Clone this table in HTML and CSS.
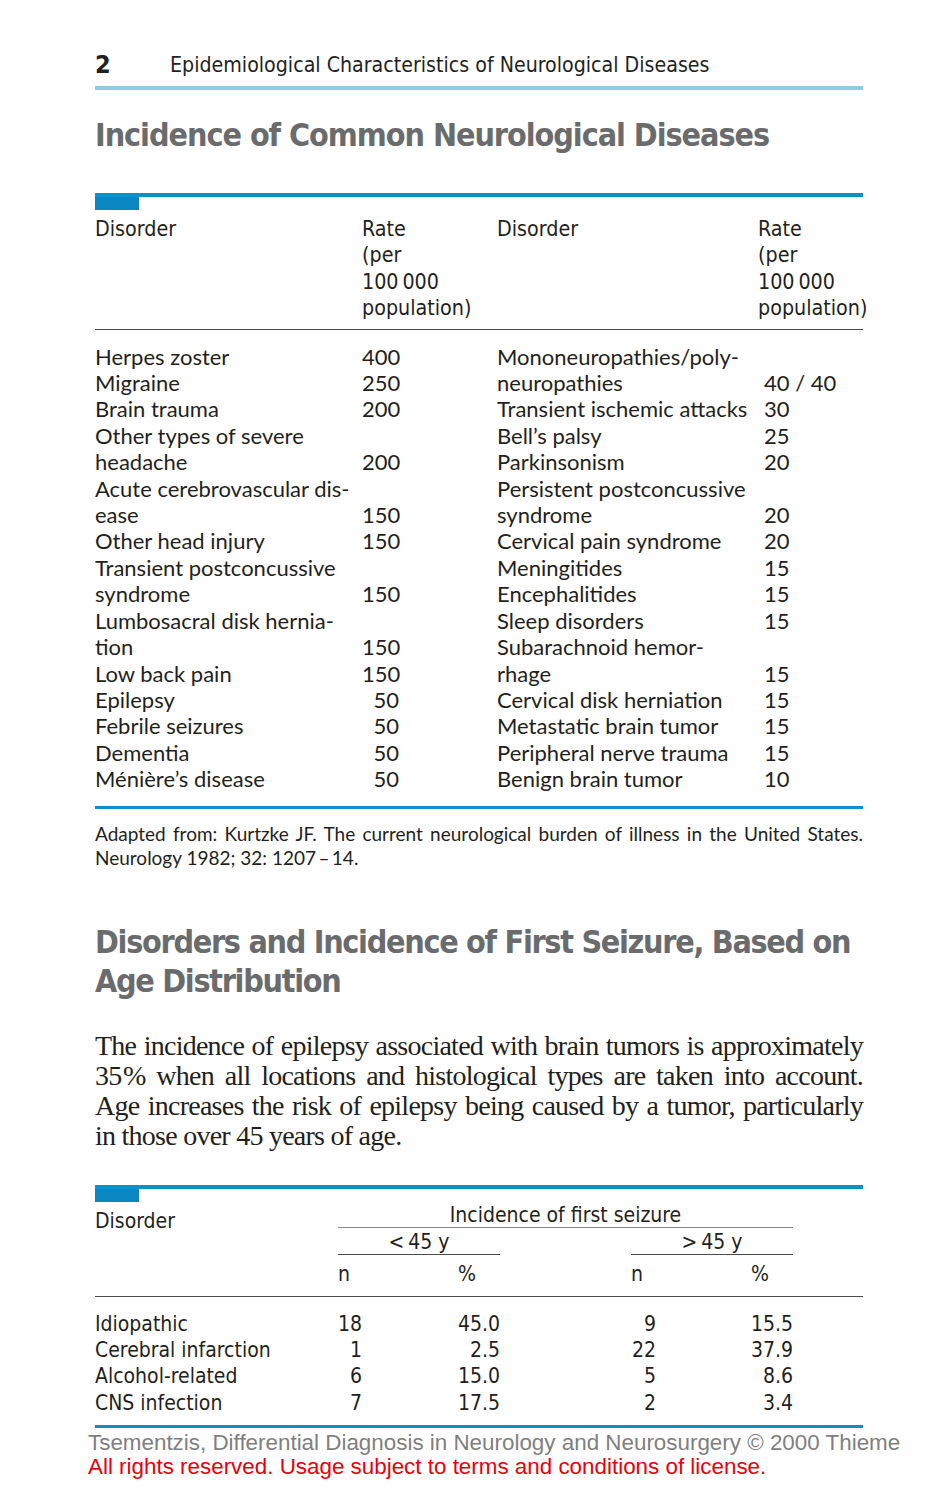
FILE: index.html
```html
<!DOCTYPE html>
<html lang="en">
<head>
<meta charset="utf-8">
<title>Epidemiological Characteristics of Neurological Diseases</title>
<link rel="stylesheet" href="styles.css">
</head>
<body>
<div class="page">
  <header class="running-head">
    <span class="folio">2</span>
    <span class="chapter">Epidemiological Characteristics of Neurological Diseases</span>
  </header>

  <h1 class="section-title">Incidence of Common Neurological Diseases</h1>

  <section class="table t1">
    <div class="tab"></div>
    <div class="t1-head">
      <div class="h-dis">Disorder</div>
      <div class="h-rate">Rate<br>(per<br>100&#8201;000<br>population)</div>
      <div class="h-dis">Disorder</div>
      <div class="h-rate">Rate<br>(per<br>100&#8201;000<br>population)</div>
    </div>
    <div class="t1-body">
      <div class="half left">
        <div class="nm">Herpes zoster</div><div class="num">400</div>
        <div class="nm">Migraine</div><div class="num">250</div>
        <div class="nm">Brain trauma</div><div class="num">200</div>
        <div class="nm">Other types of severe<br>headache</div><div class="num">200</div>
        <div class="nm">Acute cerebrovascular dis-<br>ease</div><div class="num">150</div>
        <div class="nm">Other head injury</div><div class="num">150</div>
        <div class="nm">Transient postconcussive<br>syndrome</div><div class="num">150</div>
        <div class="nm">Lumbosacral disk hernia-<br>tion</div><div class="num">150</div>
        <div class="nm">Low back pain</div><div class="num">150</div>
        <div class="nm">Epilepsy</div><div class="num">50</div>
        <div class="nm">Febrile seizures</div><div class="num">50</div>
        <div class="nm">Dementia</div><div class="num">50</div>
        <div class="nm">Ménière’s disease</div><div class="num">50</div>
      </div>
      <div class="half right">
        <div class="nm">Mononeuropathies/poly-<br>neuropathies</div><div class="num">40 / 40</div>
        <div class="nm">Transient ischemic attacks</div><div class="num">30</div>
        <div class="nm">Bell’s palsy</div><div class="num">25</div>
        <div class="nm">Parkinsonism</div><div class="num">20</div>
        <div class="nm">Persistent postconcussive<br>syndrome</div><div class="num">20</div>
        <div class="nm">Cervical pain syndrome</div><div class="num">20</div>
        <div class="nm">Meningitides</div><div class="num">15</div>
        <div class="nm">Encephalitides</div><div class="num">15</div>
        <div class="nm">Sleep disorders</div><div class="num">15</div>
        <div class="nm">Subarachnoid hemor-<br>rhage</div><div class="num">15</div>
        <div class="nm">Cervical disk herniation</div><div class="num">15</div>
        <div class="nm">Metastatic brain tumor</div><div class="num">15</div>
        <div class="nm">Peripheral nerve trauma</div><div class="num">15</div>
        <div class="nm">Benign brain tumor</div><div class="num">10</div>
      </div>
    </div>
  </section>

  <p class="source">Adapted from: Kurtzke JF. The current neurological burden of illness in the United States. Neurology 1982; 32: 1207&#8201;–&#8201;14.</p>

  <h2 class="section-title two">Disorders and Incidence of First Seizure, Based on Age Distribution</h2>

  <p class="body-text">The incidence of epilepsy associated with brain tumors is approximately 35&#8202;% when all locations and histological types are taken into account. Age increases the risk of epilepsy being caused by a tumor, particularly in those over 45 years of age.</p>

  <section class="table t2">
    <div class="tab"></div>
    <div class="t2-grid">
      <div class="c-dis">Disorder</div>
      <div class="c-inc">Incidence of first seizure</div>
      <div class="c-lt">&lt;&#8201;45 y</div>
      <div class="c-gt">&gt;&#8201;45 y</div>
      <div class="c-n1 sub">n</div>
      <div class="c-p1 sub">%</div>
      <div class="c-n2 sub">n</div>
      <div class="c-p2 sub">%</div>
      <div class="rule"></div>

      <div class="d first">Idiopathic</div><div class="v first">18</div><div class="v first">45.0</div><div class="v first n2">9</div><div class="v first">15.5</div>
      <div class="d">Cerebral infarction</div><div class="v">1</div><div class="v">2.5</div><div class="v n2">22</div><div class="v">37.9</div>
      <div class="d">Alcohol-related</div><div class="v">6</div><div class="v">15.0</div><div class="v n2">5</div><div class="v">8.6</div>
      <div class="d last">CNS infection</div><div class="v last">7</div><div class="v last">17.5</div><div class="v n2 last">2</div><div class="v last">3.4</div>
    </div>
  </section>
</div>
<footer class="license">
  <div class="credit">Tsementzis, Differential Diagnosis in Neurology and Neurosurgery © 2000 Thieme</div>
  <div class="rights">All rights reserved. Usage subject to terms and conditions of license.</div>
</footer>
</body>
</html>
```

FILE: styles.css
```css
html, body {
  margin: 0;
  padding: 0;
  background: #ffffff;
}

body {
  color: #231f20;
  font-family: "Lato", "Open Sans", sans-serif;
}

.page {
  width: 768px;
  margin-left: 95px;
  padding-top: 51px;
}

/* running head */
.running-head {
  display: flex;
  align-items: center;
  height: 26px;
  padding-bottom: 9px;
  border-bottom: 4px solid #8ecae6;
  font-family: "DejaVu Sans Condensed", "Liberation Sans", sans-serif;
}

.folio {
  width: 75px;
  font-weight: bold;
  font-size: 25px;
}

.chapter {
  font-size: 21.2px;
}

/* section titles */
.section-title {
  margin: 24px 0 0 0;
  font-family: "DejaVu Sans Condensed", "Liberation Sans", sans-serif;
  font-weight: bold;
  font-size: 32px;
  line-height: 42px;
  letter-spacing: -1.05px;
  color: #6a6b6d;
}

.section-title.two {
  margin-top: 53px;
  line-height: 39px;
  letter-spacing: -1.3px;
}

/* tables */
.table {
  border-top: 4px solid #0b90c9;
  border-bottom: 3px solid #0b90c9;
}

.tab {
  width: 44px;
  height: 13px;
  background: #0a87c3;
}

.t1 {
  margin-top: 37px;
}

.t1-head {
  display: grid;
  grid-template-columns: 267px 135px 261px 1fr;
  padding-top: 6px;
  padding-bottom: 7px;
  border-bottom: 1px solid #4a4a4a;
  font-family: "DejaVu Sans Condensed", "Liberation Sans", sans-serif;
  font-size: 21.3px;
  line-height: 26.4px;
  white-space: nowrap;
}

.t1-body {
  display: flex;
  padding-top: 14px;
  padding-bottom: 13px;
  font-size: 22px;
  line-height: 26.4px;
}

.half {
  display: grid;
  align-items: end;
}

.half.left {
  width: 402px;
  grid-template-columns: 267px 37px;
}

.half.left .num {
  text-align: right;
}

.half.right {
  grid-template-columns: 267px auto;
  white-space: nowrap;
}

.nm {
  white-space: nowrap;
}

/* source note */
.source {
  margin: 13px 0 0 0;
  font-family: "Lato", "Open Sans", sans-serif;
  font-size: 19px;
  line-height: 24px;
  text-align: justify;
  color: #231f20;
}

/* body paragraph */
.body-text {
  margin: 30px 0 0 0;
  font-family: "Liberation Serif", "DejaVu Serif", serif;
  font-size: 28px;
  line-height: 30px;
  letter-spacing: -0.75px;
  text-align: justify;
}

/* second table */
.t2 {
  margin-top: 34px;
}

.t2-grid {
  display: grid;
  grid-template-columns: 243px 24px 138px 131px 25px 137px 1fr;
  font-family: "DejaVu Sans Condensed", "Liberation Sans", sans-serif;
  font-size: 21px;
  line-height: 24px;
}

.c-dis {
  grid-column: 1;
  grid-row: 1 / span 2;
  padding-top: 7px;
}

.c-inc {
  grid-column: 2 / 7;
  grid-row: 1;
  text-align: center;
  border-bottom: 1px solid #8a8a8a;
  padding-top: 1px;
}

.c-lt {
  grid-column: 2 / 4;
  grid-row: 2;
  text-align: center;
  padding-top: 2px;
  border-bottom: 1px solid #4a4a4a;
}

.c-gt {
  grid-column: 5 / 7;
  grid-row: 2;
  text-align: center;
  padding-top: 2px;
  border-bottom: 1px solid #4a4a4a;
}

.sub {
  grid-row: 3;
  padding-top: 7px;
  padding-bottom: 10px;
}

.c-n1 { grid-column: 2; }
.c-p1 { grid-column: 3; padding-left: 96px; }
.c-n2 { grid-column: 5; }
.c-p2 { grid-column: 6; padding-left: 95px; }

.rule {
  grid-column: 1 / -1;
  border-top: 1px solid #4a4a4a;
}

.d {
  grid-column: 1;
  line-height: 26.4px;
}

.v {
  text-align: right;
  line-height: 26.4px;
}

.v.n2 {
  grid-column: 5;
}

.first {
  padding-top: 14px;
}

.last {
  padding-bottom: 9px;
}

/* license footer */
.license {
  margin-left: 88px;
  padding-top: 3px;
  font-family: "Liberation Sans", Arial, sans-serif;
  font-size: 22.4px;
  line-height: 24px;
}

.credit {
  color: #7f7f7f;
}

.rights {
  color: #e8000b;
}
```
